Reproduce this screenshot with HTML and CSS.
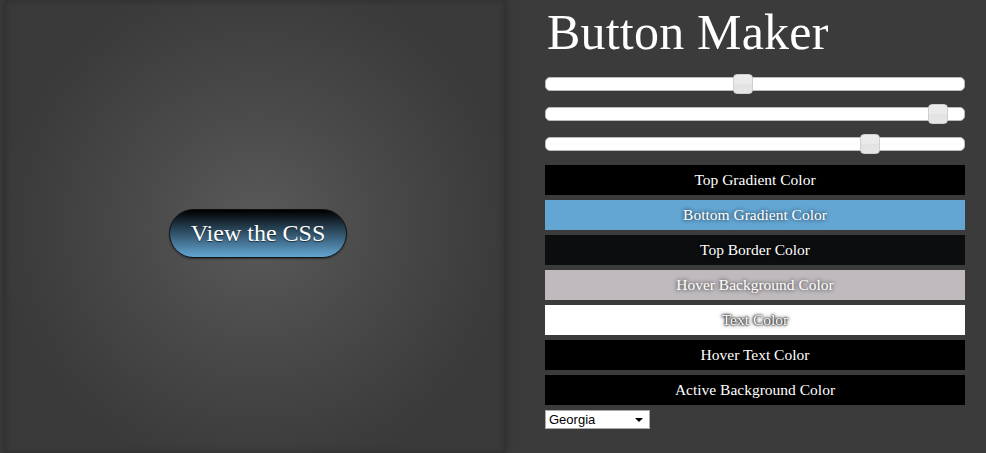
FILE: index.html
```html
<!DOCTYPE html>
<html>
<head>
<meta charset="utf-8">
<link rel="stylesheet" href="styles.css">
</head>
<body>
<div class="page">
  <section class="preview">
    <a class="demo-btn" href="#">View the CSS</a>
  </section>
  <section class="maker">
    <h1 class="title">Button Maker</h1>
    <input class="range" type="range" min="0" max="100" value="47">
    <input class="range" type="range" min="0" max="100" value="96">
    <input class="range" type="range" min="0" max="100" value="79">
    <div class="swatch c-black">Top Gradient Color</div>
    <div class="swatch c-blue">Bottom Gradient Color</div>
    <div class="swatch c-dark">Top Border Color</div>
    <div class="swatch c-grey">Hover Background Color</div>
    <div class="swatch c-white">Text Color</div>
    <div class="swatch c-black">Hover Text Color</div>
    <div class="swatch c-black">Active Background Color</div>
    <select class="font-select">
      <option>Georgia</option>
    </select>
  </section>
</div>
</body>
</html>
```
FILE: styles.css
```css
html, body {
  margin: 0;
  padding: 0;
  height: 100%;
}
body {
  background: #3b3b3b;
  font-family: "Liberation Serif", "DejaVu Serif", serif;
  overflow: hidden;
}
.page {
  display: flex;
  height: 453px;
}
.preview {
  margin-left: 5px;
  width: 500px;
  flex: none;
  display: flex;
  align-items: center;
  justify-content: center;
  padding-top: 14px;
  padding-left: 6px;
  box-sizing: border-box;
  background: radial-gradient(ellipse 260px 260px at 253px 226px, #5a5a5a 0%, #4a4a4a 45%, #3c3c3c 90%, #3a3a3a 100%);
  box-shadow: 0 0 8px rgba(0,0,0,0.35), inset 0 0 6px rgba(0,0,0,0.25);
}
.demo-btn {
  display: inline-block;
  width: 178px;
  height: 49px;
  box-sizing: border-box;
  border: 1px solid #111;
  border-radius: 25px;
  background: linear-gradient(to bottom, #000000 0%, #63a6d4 100%);
  color: #fff;
  font-family: "Liberation Serif", serif;
  font-size: 24px;
  line-height: 47px;
  text-align: center;
  text-decoration: none;
  text-shadow: 0 1px 1px rgba(0,0,0,0.6);
  box-shadow: 0 1px 2px rgba(0,0,0,0.4);
}
.maker {
  flex: none;
  width: 420px;
  margin-left: 40px;
  display: flex;
  flex-direction: column;
}
.title {
  margin: 6px 0 0 2px;
  font-weight: normal;
  font-size: 50px;
  line-height: 52px;
  color: #fff;
  height: 64px;
  letter-spacing: 0.2px;
}
.range {
  -webkit-appearance: none;
  appearance: none;
  width: 420px;
  height: 14px;
  margin: 7px 0 0 0;
  padding: 0;
  background: #fff;
  border: 1px solid #bbb;
  border-radius: 5px;
  box-sizing: border-box;
}
.range + .range {
  margin-top: 16px;
}
.range::-webkit-slider-thumb {
  -webkit-appearance: none;
  appearance: none;
  width: 20px;
  height: 20px;
  border-radius: 4px;
  background: linear-gradient(to bottom, #ececec 0%, #e9e9e9 50%, #e2e2e2 51%, #e6e6e6 100%);
  border: 1px solid #cfcfcf;
  box-sizing: border-box;
}
.swatch {
  height: 30px;
  margin-top: 5px;
  color: #fff;
  font-size: 15.5px;
  line-height: 30px;
  text-align: center;
  text-shadow: 0 0 4px rgba(0,0,0,0.9);
}
.range + .swatch {
  margin-top: 14px;
}
.c-black { background: #000; }
.c-blue { background: #63a6d4; }
.c-dark { background: #0c0d0f; }
.c-grey { background: #bfbabd; }
.c-white {
  background: #fff;
  text-shadow: 0 0 3px #000, 0 0 2px #000, 0 0 5px rgba(0,0,0,0.6);
}
.font-select {
  -webkit-appearance: none;
  appearance: none;
  margin-top: 5px;
  width: 105px;
  height: 19px;
  font-family: "Liberation Sans", Arial, sans-serif;
  font-size: 13px;
  color: #000;
  background: #fff url("data:image/svg+xml;utf8,<svg xmlns='http://www.w3.org/2000/svg' width='8' height='4'><path d='M0 0h8L4 4z' fill='black'/></svg>") no-repeat right 6px center;
  border: 1px solid #aaa;
  border-radius: 0;
  padding: 0 3px;
  align-self: flex-start;
}
```
